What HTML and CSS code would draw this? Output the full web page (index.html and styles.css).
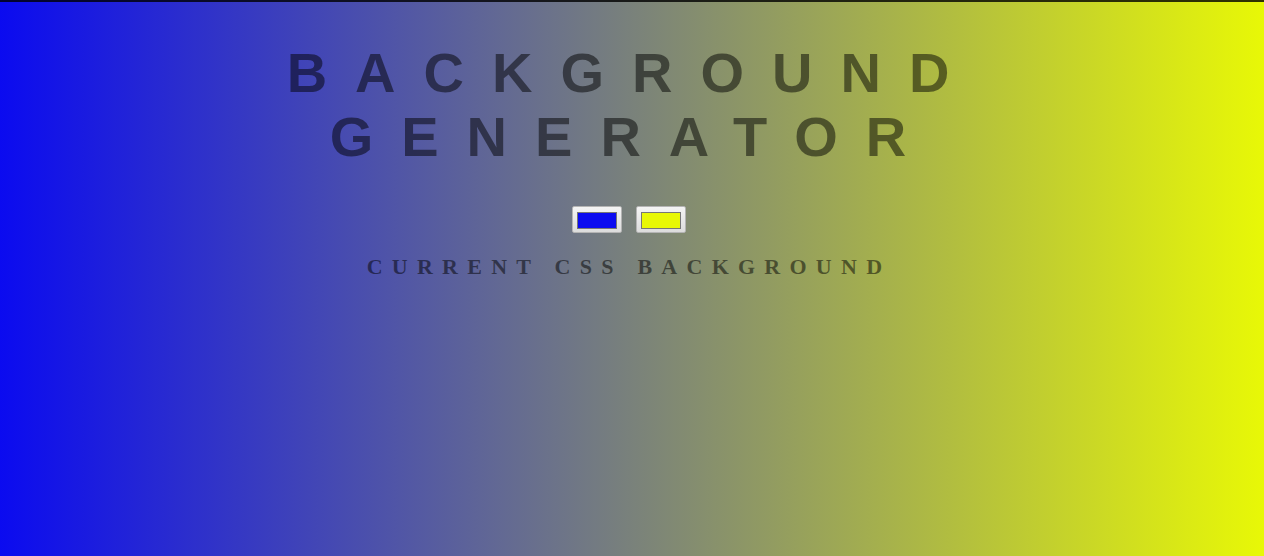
FILE: index.html
```html
<!DOCTYPE html>
<html lang="en">
<head>
<meta charset="utf-8">
<title>Background Generator</title>
<link rel="stylesheet" href="styles.css">
</head>
<body class="page">
  <h1 class="title">Background Generator</h1>
  <div class="pickers">
    <input class="picker" type="color" name="color1" value="#0b0bf0">
    <input class="picker" type="color" name="color2" value="#e8f806">
  </div>
  <h3 class="current">Current CSS Background</h3>
</body>
</html>
```
FILE: styles.css
```css
html {
  height: 100%;
}

.page {
  margin: 0;
  min-height: 100%;
  box-sizing: border-box;
  padding: 0 8px;
  border-top: 2px solid rgba(0, 0, 0, 0.8);
  background: linear-gradient(to right, #0b0bf0, #e8f806);
  text-align: center;
  text-transform: uppercase;
  color: rgba(0, 0, 0, 0.5);
}

.title {
  margin: 39px 0 37px;
  font: bold 56px/64px "Liberation Sans", Arial, sans-serif;
  letter-spacing: 0.5em;
  color: rgba(0, 0, 0, 0.5);
}

.pickers {
  display: flex;
  justify-content: center;
  gap: 14px;
  padding-right: 6px;
}

.picker {
  -webkit-appearance: none;
  appearance: none;
  box-sizing: border-box;
  width: 50px;
  height: 27px;
  margin: 0;
  padding: 5px 4px 3px;
  border: 1px solid #b4b4b4;
  border-radius: 2px;
  background: linear-gradient(#f4f4f4, #dcdcdc);
  cursor: pointer;
}

.picker::-webkit-color-swatch-wrapper {
  padding: 0;
}

.picker::-webkit-color-swatch {
  border: 1px solid #777;
  border-radius: 0;
}

.current {
  margin: 21px 0;
  padding-right: 6px;
  font: bold 22px "Liberation Serif", "Times New Roman", serif;
  letter-spacing: 9.25px;
  color: rgba(0, 0, 0, 0.5);
}
```
